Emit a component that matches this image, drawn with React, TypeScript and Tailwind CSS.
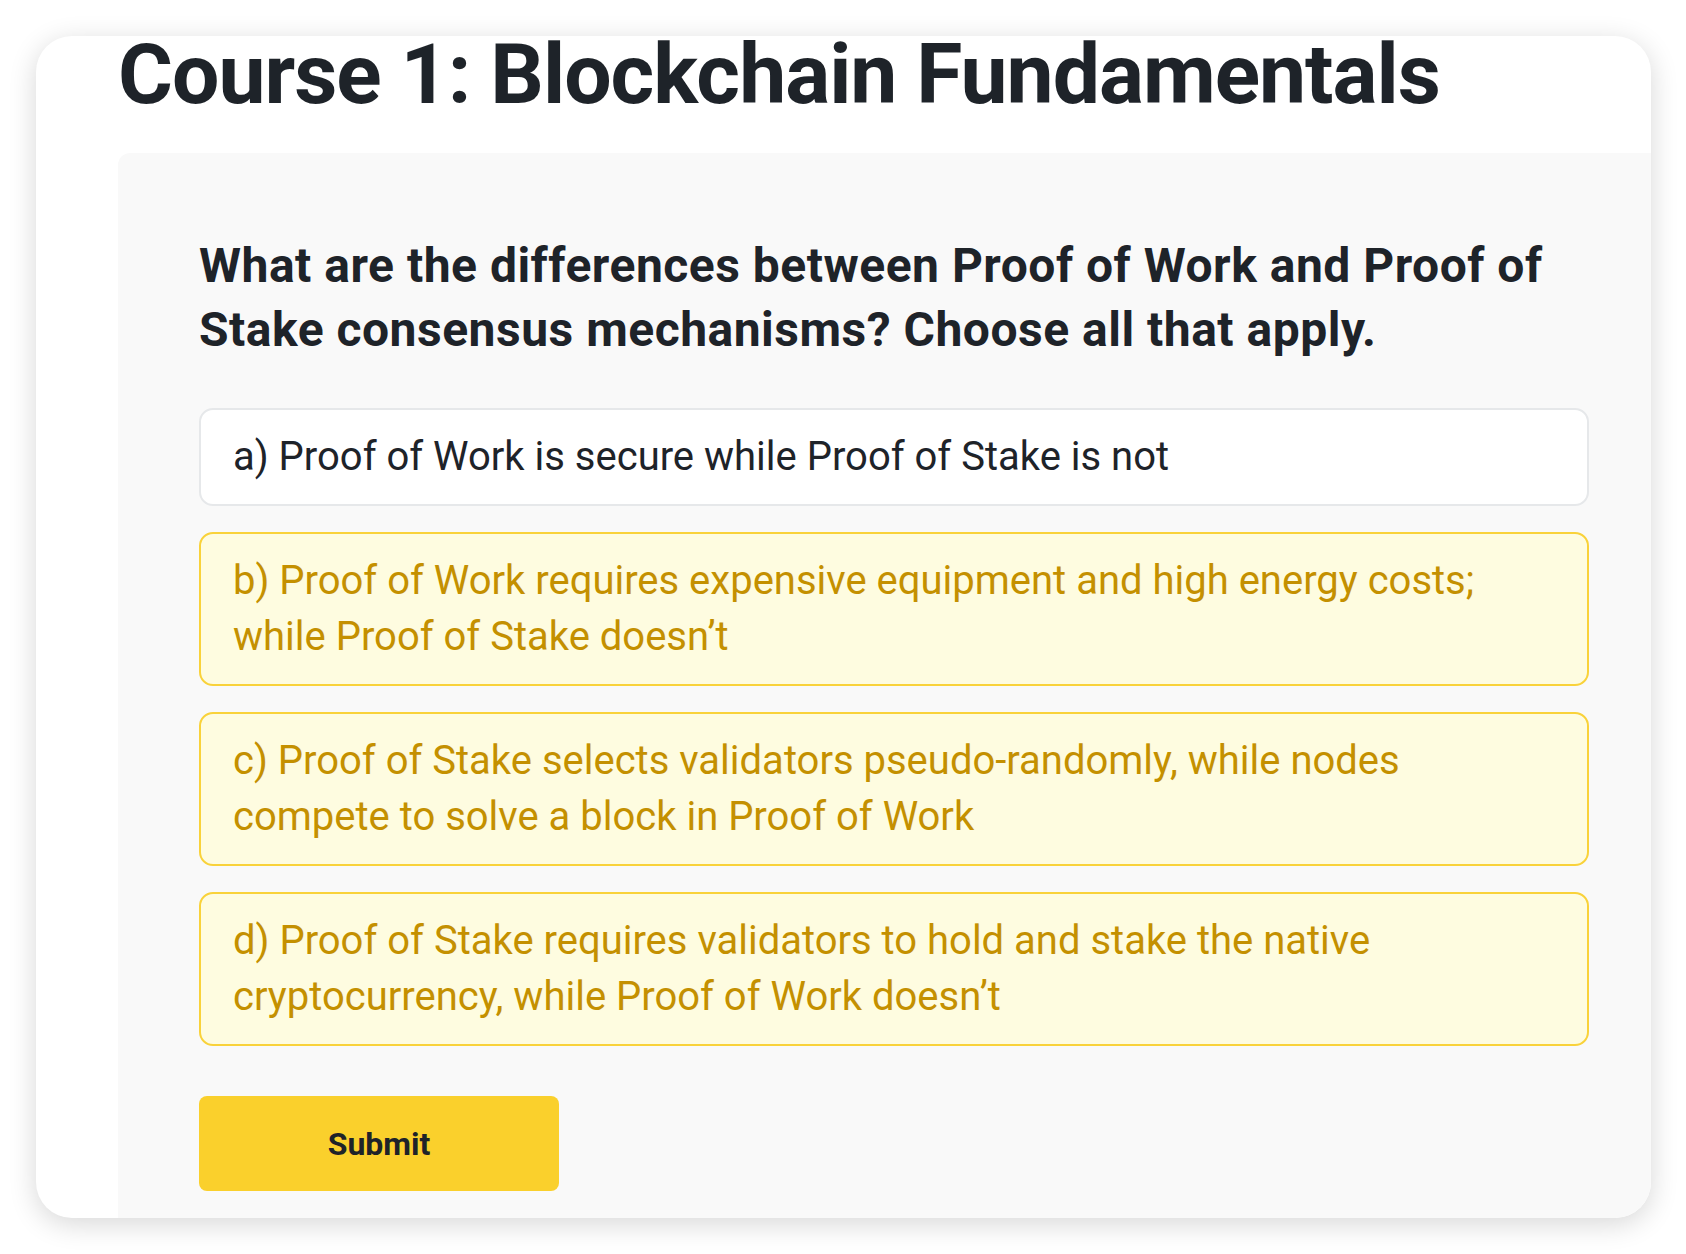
import { ReactElement } from 'react';

type Option = {
  label: string;
  selected: boolean;
};

const options: Option[] = [
  { label: 'a) Proof of Work is secure while Proof of Stake is not', selected: false },
  { label: 'b) Proof of Work requires expensive equipment and high energy costs; while Proof of Stake doesn’t', selected: true },
  { label: 'c) Proof of Stake selects validators pseudo-randomly, while nodes compete to solve a block in Proof of Work', selected: true },
  { label: 'd) Proof of Stake requires validators to hold and stake the native cryptocurrency, while Proof of Work doesn’t', selected: true },
];

function Choice({ label, selected }: Option): ReactElement {
  return (
    <button
      type="button"
      className={
        selected
          ? 'w-full text-left rounded-[14px] border-2 border-[#f9d23a] bg-[#fefce0] px-[32px] py-[19px] text-[#c49000]'
          : 'w-full text-left rounded-[14px] border-2 border-[#e6e8ea] bg-white px-[32px] py-[19px] text-[#1e2329]'
      }
    >
      <span className="block max-w-[1290px] text-[40px] leading-[56px]">{label}</span>
    </button>
  );
}

export default function App(): ReactElement {
  return (
    <div className="min-h-screen bg-white pt-[36px] pl-[36px] font-['Roboto',sans-serif]">
      <div className="flex h-[1182px] w-[1615px] flex-col rounded-[36px] bg-white shadow-[0_6px_28px_rgba(0,0,0,0.16)]">
        <h1 className="pl-[82px] text-[84px] font-bold leading-[78px] tracking-[-1px] text-[#1e2329]">
          Course 1: Blockchain Fundamentals
        </h1>
        <div className="ml-[82px] mt-[39px] flex-1 rounded-tl-[12px] rounded-br-[36px] bg-[#f9f9f9] pl-[81px] pr-[62px] pt-[81px]">
          <h2 className="text-[48px] font-bold leading-[64px] tracking-[0.5px] text-[#1e2329]">
            What are the differences between Proof of Work and Proof of Stake consensus mechanisms? Choose all that apply.
          </h2>
          <div className="mt-[46px] flex flex-col gap-[26px]">
            {options.map((o) => (
              <Choice key={o.label} {...o} />
            ))}
          </div>
          <button
            type="button"
            className="mt-[50px] h-[95px] w-[360px] rounded-[8px] bg-[#fad02c] text-[32px] font-bold text-[#1e2329]"
          >
            Submit
          </button>
        </div>
      </div>
    </div>
  );
}
